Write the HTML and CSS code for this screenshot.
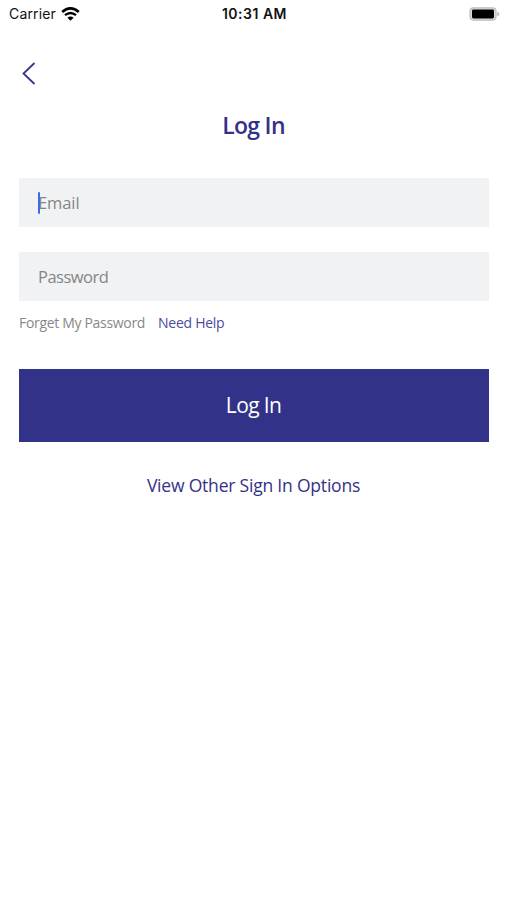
FILE: index.html
```html
<!DOCTYPE html>
<html lang="en">
<head>
<meta charset="utf-8">
<title>Log In</title>
<link rel="stylesheet" href="styles.css">
</head>
<body>
<header class="status">
  <div class="carrier"><span class="carrier-name">Carrier</span>
    <svg class="wifi" width="19" height="14" viewBox="0 0 19 14"><path d="M1.2 5Q9.5-2.2 17.8 5" fill="none" stroke="#000" stroke-width="2.7"/><path d="M4 8.2Q9.5 3.6 15 8.2" fill="none" stroke="#000" stroke-width="2.4"/><path d="M6.4 10.7Q9.5 8.3 12.6 10.7L9.5 13.8Z"/></svg>
  </div>
  <time class="clock">10:31 AM</time>
  <svg class="battery" width="31" height="14" viewBox="0 0 31 14"><rect x="1" y=".9" width="26" height="12.2" rx="3.5" fill="#ddd" stroke="#bbb" stroke-width="1.2"/><rect x="3" y="2.4" width="22" height="9" rx="1.4"/><path d="M28.3 4.7Q30.3 5.4 30.3 7T28.3 9.3Z" fill="#b5b5b5"/></svg>
</header>
<nav class="nav"><svg class="back" width="14" height="24" viewBox="0 0 14 24"><path d="M12.5 1L1.5 11.5L12.5 22" fill="none" stroke="#373490" stroke-width="1.8"/></svg></nav>
<main class="main">
  <h1 class="title"><span class="title-text">Log In</span></h1>
  <div class="field field-active"><span class="caret"></span><span class="email">Email</span></div>
  <div class="field"><span class="password">Password</span></div>
  <div class="links"><a class="forgot">Forget My Password</a><a class="help">Need Help</a></div>
  <button class="submit"><span class="submit-text">Log In</span></button>
  <a class="other"><span class="other-text">View Other Sign In Options</span></a>
</main>
</body>
</html>
```
FILE: styles.css
```css
* { box-sizing: border-box; }
body { margin: 0; background: #fff; color: #343189; font-family: "Open Sans", "Noto Sans", sans-serif; }
.status { height: 28px; display: grid; grid-template-columns: 1fr auto 1fr; align-items: center; padding: 0 7px 1px 9px; color: #111; font: 14px/20px Inter, sans-serif; }
.carrier { display: flex; align-items: center; gap: 5px; }
.carrier-name { letter-spacing: .15px; }
.clock { font-weight: 600; letter-spacing: .5px; }
.battery { justify-self: end; }
.nav { height: 72px; padding: 34px 22px 0; }
.back { display: block; }
.main { padding: 0 18px 0 19px; display: flex; flex-direction: column; }
.title { margin: 8px 0 35px; padding-right: 1px; font: 650 23px/35px "Open Sans", sans-serif; letter-spacing: -.7px; text-align: center; }
.field { height: 49px; margin-bottom: 25px; padding: 0 0 1px 19px; display: flex; align-items: center; background: #f0f2f4; color: #858585; font-size: 16.5px; letter-spacing: -.5px; }
.email { letter-spacing: -.1px; }
.field + .field { margin-bottom: 12px; }
.field-active { position: relative; }
.caret { position: absolute; left: 18.5px; top: 14px; width: 2.5px; height: 22px; border-radius: 1px; background: #4169e1; }
.links { display: flex; gap: 13px; height: 20px; align-items: center; font-size: 14px; line-height: 18px; letter-spacing: -.32px; color: #888; }
.help { color: #4d4aa0; letter-spacing: -.27px; }
.submit { margin: 36px 0 31px; height: 73px; padding: 0 1px 2px 0; border: 0; background: #323388; color: #fff; font: 21px "Open Sans", sans-serif; letter-spacing: -.65px; }
.other { padding-right: 1px; text-align: center; font: 500 17.5px/24px "Open Sans", sans-serif; letter-spacing: -.2px; }
```
